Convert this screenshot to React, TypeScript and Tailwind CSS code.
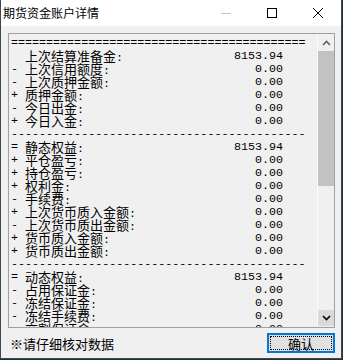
type Row =
    | { kind: 'sep'; ch: string }
    | { kind: 'item'; sign: string; label: string; value: string };

const rows: Row[] = [
    { kind: 'sep', ch: '=' },
    { kind: 'item', sign: ' ', label: '上次结算准备金', value: '8153.94' },
    { kind: 'item', sign: '-', label: '上次信用额度', value: '0.00' },
    { kind: 'item', sign: '-', label: '上次质押金额', value: '0.00' },
    { kind: 'item', sign: '+', label: '质押金额', value: '0.00' },
    { kind: 'item', sign: '-', label: '今日出金', value: '0.00' },
    { kind: 'item', sign: '+', label: '今日入金', value: '0.00' },
    { kind: 'sep', ch: '-' },
    { kind: 'item', sign: '=', label: '静态权益', value: '8153.94' },
    { kind: 'item', sign: '+', label: '平仓盈亏', value: '0.00' },
    { kind: 'item', sign: '+', label: '持仓盈亏', value: '0.00' },
    { kind: 'item', sign: '+', label: '权利金', value: '0.00' },
    { kind: 'item', sign: '-', label: '手续费', value: '0.00' },
    { kind: 'item', sign: '+', label: '上次货币质入金额', value: '0.00' },
    { kind: 'item', sign: '-', label: '上次货币质出金额', value: '0.00' },
    { kind: 'item', sign: '+', label: '货币质入金额', value: '0.00' },
    { kind: 'item', sign: '+', label: '货币质出金额', value: '0.00' },
    { kind: 'sep', ch: '-' },
    { kind: 'item', sign: '=', label: '动态权益', value: '8153.94' },
    { kind: 'item', sign: '-', label: '占用保证金', value: '0.00' },
    { kind: 'item', sign: '-', label: '冻结保证金', value: '0.00' },
    { kind: 'item', sign: '-', label: '冻结手续费', value: '0.00' },
    { kind: 'item', sign: '-', label: '交割保证金', value: '0.00' },
];

const mono = "font-['Liberation_Mono','Noto_Sans_CJK_SC',monospace] text-[11.7px]";
const cjk = "font-['Noto_Sans_CJK_SC',sans-serif] text-[13px]";

// 一行文本
const Line = ({ row }: { row: Row }) => {
    if (row.kind === 'sep') {
        return (
            <div className={`h-[13px] leading-[13px] whitespace-pre ${mono}`}>{row.ch.repeat(42)}</div>
        );
    }
    return (
        <div className="flex h-[13px] w-[272px] items-center leading-[13px] whitespace-pre">
            <span className={`w-[14px] shrink-0 ${mono}`}>{row.sign}</span>
            <span className={`flex-1 ${cjk}`}>
                {row.label}
                <span className={mono}>:</span>
            </span>
            <span className={mono}>{row.value}</span>
        </div>
    );
};

const Chevron = ({ up, color }: { up?: boolean; color: string }) => (
    <svg width="9" height="6" viewBox="0 0 9 6">
        <path d={up ? 'M1 5 L4.5 1.5 L8 5' : 'M1 1 L4.5 4.5 L8 1'} fill="none" stroke={color} strokeWidth="1.6" />
    </svg>
);

const App = () => (
    <div className="h-[360px] w-[343px] bg-[#1f3038]">
        <div className="flex h-[359px] w-[342px] flex-col border-x border-b border-[#3a4850] bg-[#f0f0f0] text-black">
            {/* title bar */}
            <div className="flex h-[26px] shrink-0 items-center bg-white">
                <span className="flex-1 pl-[2px] font-['Noto_Sans_CJK_SC',sans-serif] text-[12px] leading-none">
                    期货资金账户详情
                </span>
                <div className="flex h-full w-[46px] items-center justify-center">
                    <div className="h-px w-[10px] bg-[#c4c4c4]" />
                </div>
                <div className="flex h-full w-[46px] items-center justify-center">
                    <div className="h-[10px] w-[10px] border border-black" />
                </div>
                <div className="flex h-full w-[46px] items-center justify-center">
                    <svg width="10" height="10" viewBox="0 0 10 10">
                        <path d="M0 0 L10 10 M10 0 L0 10" stroke="black" strokeWidth="1" />
                    </svg>
                </div>
            </div>

            {/* text area */}
            <div className="mt-[7px] ml-[7px] flex h-[295px] w-[327px] border border-[#a0a0a0]">
                <div className="flex-1 overflow-hidden pt-[3px] pl-[2px]">
                    {rows.map((r, i) => (
                        <Line key={i} row={r} />
                    ))}
                </div>
                <div className="flex w-[17px] shrink-0 flex-col border-l border-[#fafafa] bg-[#f0f0f0]">
                    <div className="flex h-[17px] items-center justify-center">
                        <Chevron up color="#606060" />
                    </div>
                    <div className="h-[135px] bg-[#c2c2c2]" />
                    <div className="flex-1" />
                    <div className="flex h-[16px] items-center justify-center bg-[#dadada]">
                        <Chevron color="#000" />
                    </div>
                    <div className="h-[1px]" />
                </div>
            </div>

            {/* footer */}
            <div className="flex flex-1 items-center pr-[6px] pl-[9px]">
                <span className={`flex-1 ${cjk} leading-none`}>※请仔细核对数据</span>
                <div className="flex h-[20px] w-[68px] border-2 border-[#0078d7] bg-[#e1e1e1] p-px">
                    <div className={`flex flex-1 items-center justify-center border border-dotted border-black ${cjk} leading-none`}>
                        确认
                    </div>
                </div>
            </div>
        </div>
    </div>
);

export default App;
